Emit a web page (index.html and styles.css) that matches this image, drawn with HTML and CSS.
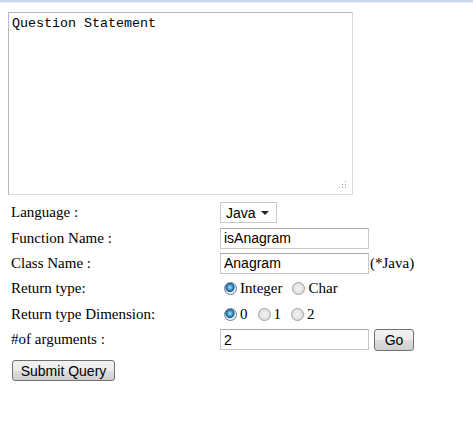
FILE: index.html
```html
<!DOCTYPE html>
<html>
<head>
<meta charset="utf-8">
<link rel="stylesheet" href="styles.css">
</head>
<body>
<div class="topbar"></div>
<form class="page">
  <div class="qwrap">
    <textarea class="question">Question Statement</textarea>
    <svg class="grip" width="8" height="8" viewBox="0 0 8 8">
      <rect x="6" y="0" width="1" height="1" fill="#9a9a9a"/>
      <rect x="3" y="3" width="1" height="1" fill="#9a9a9a"/>
      <rect x="6" y="3" width="1" height="1" fill="#9a9a9a"/>
      <rect x="0" y="6" width="1" height="1" fill="#9a9a9a"/>
      <rect x="3" y="6" width="1" height="1" fill="#9a9a9a"/>
      <rect x="6" y="6" width="1" height="1" fill="#9a9a9a"/>
    </svg>
  </div>
  <div class="fields">
    <label class="lbl">Language :</label>
    <div class="ctl">
      <div class="select"><span>Java</span><span class="arrow"></span></div>
    </div>
    <label class="lbl">Function Name :</label>
    <div class="ctl"><input class="txt" type="text" value="isAnagram"></div>
    <label class="lbl">Class Name :</label>
    <div class="ctl"><input class="txt" type="text" value="Anagram"><span class="note">(*Java)</span></div>
    <label class="lbl">Return type:</label>
    <div class="ctl radios">
      <input class="rad" type="radio" name="rt" checked><span class="rl">Integer</span>
      <input class="rad" type="radio" name="rt"><span class="rl">Char</span>
    </div>
    <label class="lbl">Return type Dimension:</label>
    <div class="ctl radios">
      <input class="rad" type="radio" name="rd" checked><span class="rl">0</span>
      <input class="rad" type="radio" name="rd"><span class="rl">1</span>
      <input class="rad" type="radio" name="rd"><span class="rl">2</span>
    </div>
    <label class="lbl">#of arguments :</label>
    <div class="ctl"><input class="txt" type="text" value="2"><button type="button" class="btn go">Go</button></div>
  </div>
  <button type="button" class="btn submit">Submit Query</button>
</form>
</body>
</html>
```
FILE: styles.css
```css
html, body {
  margin: 0;
  padding: 0;
  background: #ffffff;
}
body {
  font-family: "Liberation Serif", "Times New Roman", serif;
  font-size: 15px;
  color: #000;
}
.topbar {
  height: 2px;
  background: #c9d7e8;
  border-bottom: 1px solid #e4ebf3;
}
.page {
  padding: 9px 8px 0 8px;
}
.qwrap {
  position: relative;
  width: 345px;
  height: 183px;
}
.question {
  display: block;
  box-sizing: border-box;
  width: 345px;
  height: 183px;
  margin: 0;
  border: 1px solid #b8b8b8;
  border-right-color: #dcdcdc;
  border-bottom-color: #dcdcdc;
  padding: 3px 3px;
  font-family: "Liberation Mono", "Courier New", monospace;
  font-size: 13.33px;
  line-height: 16px;
  color: #000;
  resize: none;
  outline: none;
}
.grip {
  position: absolute;
  right: 6px;
  bottom: 6px;
}
.fields {
  display: grid;
  grid-template-columns: 209px auto;
  grid-auto-rows: 25.4px;
  align-items: center;
  margin-top: 5px;
  padding-left: 3px;
}
.lbl {
  line-height: 17px;
}
.ctl {
  display: flex;
  align-items: center;
}
.select {
  box-sizing: border-box;
  width: 57px;
  height: 21px;
  border: 1px solid #c8c8c8;
  display: flex;
  align-items: center;
  justify-content: space-between;
  padding: 0 7px 0 5px;
  font-family: "Liberation Sans", Arial, sans-serif;
  font-size: 14px;
}
.arrow {
  width: 0;
  height: 0;
  border-left: 4px solid transparent;
  border-right: 4px solid transparent;
  border-top: 4px solid #222;
  margin-top: 1px;
}
.txt {
  box-sizing: border-box;
  width: 149px;
  height: 21px;
  margin: 0;
  border: 1px solid #c6c6c6;
  border-top-color: #a8a8a8;
  padding: 0 3px;
  font-family: "Liberation Sans", Arial, sans-serif;
  font-size: 14px;
  color: #000;
  outline: none;
}
.note {
  margin-left: 1px;
}
.rad {
  appearance: none;
  -webkit-appearance: none;
  box-sizing: border-box;
  width: 13px;
  height: 13px;
  margin: 0 3px 0 4px;
  border-radius: 50%;
  border: 1px solid #a0a0a0;
  background: radial-gradient(circle at 50% 50%, #f4f4f4 0, #e2e2e2 60%, #cfcfcf 100%);
}
.rad:checked {
  border-color: #6a7f96;
  background: radial-gradient(circle at 45% 40%, #b5e0f6 0, #3a93c8 30%, #1d5a88 48%, #eef2f5 56%, #d6dde4 100%);
}
.rl {
  margin-right: 6px;
}
.radios .rl:last-child {
  margin-right: 0;
}
.btn {
  box-sizing: border-box;
  margin: 0;
  border: 1px solid #707070;
  border-radius: 3px;
  background: linear-gradient(#f2f2f2 0, #ebebeb 50%, #dddddd 51%, #cfcfcf 100%);
  font-family: "Liberation Sans", Arial, sans-serif;
  font-size: 14px;
  color: #000;
  padding: 0;
}
.go {
  width: 40px;
  height: 22px;
  margin-left: 5px;
}
.submit {
  display: block;
  width: 103px;
  height: 21px;
  margin: 8px 0 0 4px;
}
```
